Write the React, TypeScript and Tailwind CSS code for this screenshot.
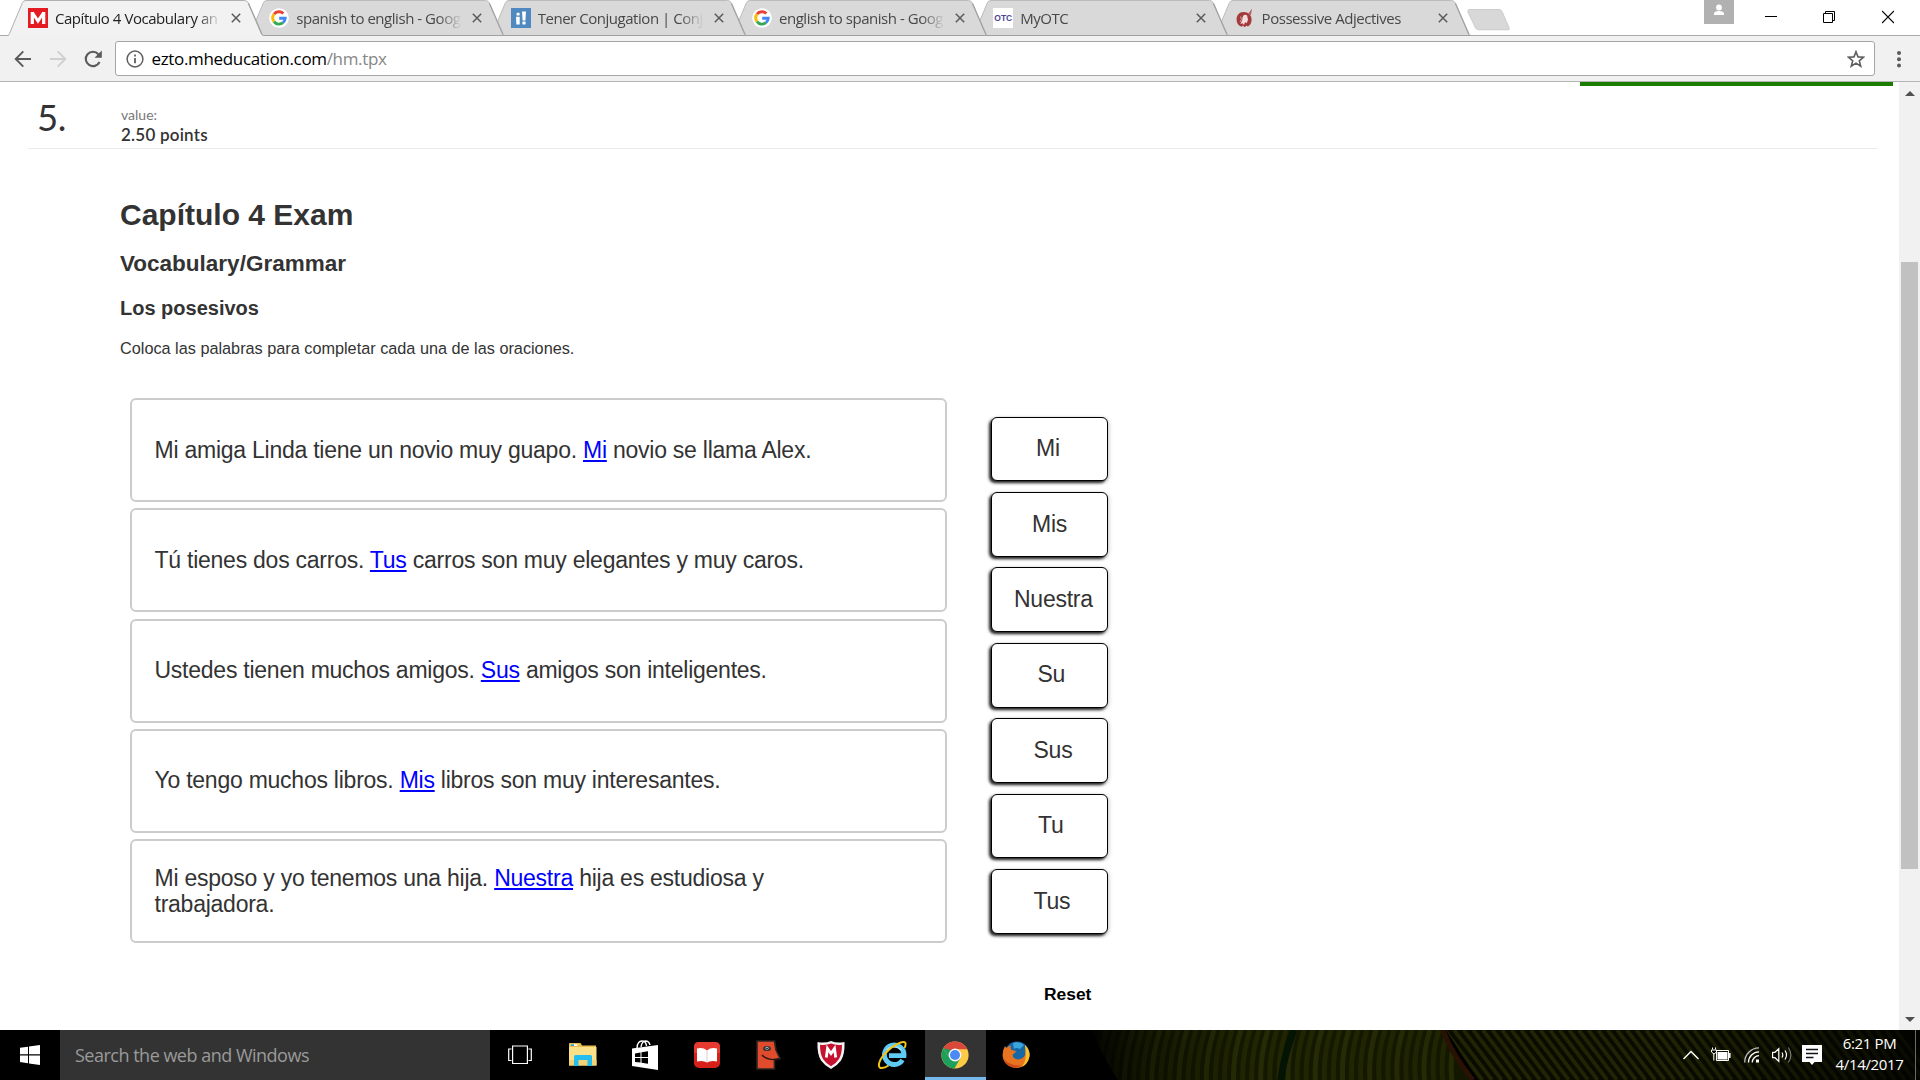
import React from "react";

type Tab = { title: string; icon: React.ReactNode; active?: boolean };

const GoogleIcon = () => (
  <svg width="20" height="20" viewBox="0 0 20 20" fill="none" strokeWidth="2.9">
    <circle cx="10" cy="10" r="9.8" fill="#fff" />
    <path d="M5 6.2A6.2 6.2 0 0 1 14.4 5.6" stroke="#ea4335" />
    <path d="M5 13.6A6.3 6.3 0 0 1 5 6.2" stroke="#fbbc05" />
    <path d="M14 14.7A6.2 6.2 0 0 1 5 13.6" stroke="#34a853" />
    <path d="M10.2 10.2H16.2A6.2 6.2 0 0 1 14 14.7" stroke="#4285f4" />
  </svg>
);

const MIcon = () => (
  <svg width="20" height="20" viewBox="0 0 20 20">
    <rect width="20" height="20" fill="#e51b24" />
    <path d="M4.300 16V4M15.700 16V4" stroke="#fff" strokeWidth="3.200" />
    <path d="M4.300 4.500L10 13L15.700 4.500" stroke="#fff" strokeWidth="3" fill="none" />
  </svg>
);

const ConjIcon = () => (
  <svg width="20" height="20" viewBox="0 0 20 20">
    <rect width="20" height="20" fill="#5089c0" />
    <g fill="#fff">
      <rect x="5.6" y="4.8" width="3" height="2.8" rx="0.6" />
      <path d="M5 8.8h3.7V16.4H5.4z" />
      <path d="M11 3.6h4l-.6 8.800h-2.800z" />
      <rect x="11.4" y="13.4" width="3.2" height="3" rx="0.6" />
    </g>
  </svg>
);

const OtcIcon = () => (
  <span className="flex h-5 w-5 items-center justify-center bg-white font-['Liberation_Sans',sans-serif] text-[8.5px] font-bold leading-5 text-[#4b4696]">
    OTC
  </span>
);

const SpanishIcon = () => (
  <svg width="20" height="20" viewBox="0 0 20 20">
    <path d="M8.500 4C4 4 1.600 7.400 1.600 11.400c0 4.400 3 7 5.400 7.200l1-1.200 1.400 1.800 2-1.400 1.600.6c2.400-1.200 3.600-3.500 3.600-6.800C16.600 7.200 13.500 4 8.500 4z" fill="#a53a3c" />
    <path d="M13 6L17 .6L16 7z" fill="#b96062" />
    <path d="M8.400 7.400c1.600-1.400 4.200-.4 4 1.600 0 1.400 1 1.800.4 3.200l-1 2.800-1.800-.8-1 2.800-1.400-1.800-2.200.8 1.600-3.200c.8-1.600-.2-2.600 1.400-5.400z" fill="#f1dede" />
    <path d="M5.500 8.500l1 3-1.500 2.500" stroke="#e3bcbc" strokeWidth=".8" fill="none" />
  </svg>
);

const TABS: Tab[] = [
  { title: "Capítulo 4 Vocabulary an", icon: <MIcon />, active: true },
  { title: "spanish to english - Goog", icon: <GoogleIcon /> },
  { title: "Tener Conjugation | Conju", icon: <ConjIcon /> },
  { title: "english to spanish - Goog", icon: <GoogleIcon /> },
  { title: "MyOTC", icon: <OtcIcon /> },
  { title: "Possessive Adjectives", icon: <SpanishIcon /> },
];

function TabItem({ tab, z }: { tab: Tab; z: number }) {
  return (
    <div className="relative -mr-[15.7px] flex h-9 w-[257px] shrink-0 items-center pl-[21px]" style={{ zIndex: z }}>
      <svg className="absolute inset-0" width="257" height="36" viewBox="0 0 257 36">
        <path
          d="M0 35.500C1.500 35.500 2 34.500 2.500 33.500L15.500 2.500Q16.500 .5 19 .5H237.500Q240 .5 241 2.500L254.500 33.500Q255.400 35.500 257 35.500"
          fill={tab.active ? "#f2f2f2" : "#d9d9d9"}
          stroke={tab.active ? "#b0b0b0" : "#bcbcbc"}
          strokeWidth="1"
        />
        <path d="M241.500 3.500L255 34.500" stroke="#a3a3a3" strokeWidth="1.300" />
        {tab.active ? <path d="M2 35.500H255" stroke="#f2f2f2" /> : <path d="M0 35.500H257" stroke="#a0a0a0" />}
      </svg>
      <span className="relative h-5 w-5">{tab.icon}</span>
      <span
        className={
          "relative ml-[7px] w-[165px] overflow-hidden whitespace-nowrap text-[15px] leading-9 tracking-[-0.46px] [mask-image:linear-gradient(to_right,#000_142px,transparent_166px)] " +
          (tab.active ? "text-[#222]" : "text-[#484848]")
        }
      >
        {tab.title}
      </span>
      <svg className="relative ml-[11px]" width="10" height="10" viewBox="0 0 10 10" stroke="#5a5a5a" strokeWidth="1.500">
        <path d="M.8 .8L9.200 9.200M9.200 .8L.8 9.200" />
      </svg>
    </div>
  );
}

function TitleBar() {
  return (
    <div className="relative flex h-9 w-full justify-between border-b border-[#a9a9a9] bg-white">
      <div className="flex h-9 pl-[7px]">
        {TABS.map((t, i) => (
          <TabItem key={i} tab={t} z={10 - i} />
        ))}
        <svg className="ml-[12px] mt-[9px]" width="44" height="22" viewBox="0 0 44 22">
          <path d="M3 .5H32.500Q34 .5 35 2.500L42 18.500Q43 20.800 41 20.800H11.500Q9.500 20.800 8.500 19L1 3Q0 .5 3 .5z" fill="#d8d8d8" stroke="#cbcbcb" />
        </svg>
      </div>
      <div className="flex">
        <div className="mr-[31px] flex h-6 w-[30px] justify-center bg-[#b1b1b1]">
          <svg width="12" height="24" viewBox="0 0 12 24" fill="#fff">
            <circle cx="6" cy="7.500" r="2.900" />
            <path d="M1 15v-1.500C1 11.800 4 11 6 11s5 .8 5 2.500V15z" />
          </svg>
        </div>
        <svg className="mr-[46px]" width="12" height="36" viewBox="0 0 12 36">
          <path d="M0 16.500H12" stroke="#000" />
        </svg>
        <svg className="mr-[47px]" width="12" height="36" viewBox="0 0 12 36" fill="none" stroke="#000">
          <path d="M.5 13.500H9.500V22.500H.5z M2.500 13.500V11.500H11.500V20.500H9.500" />
        </svg>
        <svg className="mr-[26px]" width="12" height="36" viewBox="0 0 12 36" stroke="#000" strokeWidth="1.200">
          <path d="M0 11L12 23M12 11L0 23" />
        </svg>
      </div>
    </div>
  );
}

function Toolbar() {
  return (
    <div className="flex h-[46px] items-start border-b border-[#b4b4b4] bg-[#f1f1f1] pt-[5px]">
      <svg className="ml-[14px] mt-[9px]" width="18" height="18" viewBox="0 0 18 18" fill="none" stroke="#5a5a5a" strokeWidth="1.900">
        <path d="M17 9H2M9.300 1.400L1.700 9L9.300 16.600" />
      </svg>
      <svg className="ml-[17px] mt-[9px]" width="18" height="18" viewBox="0 0 18 18" fill="none" stroke="#d0d0d0" strokeWidth="1.900">
        <path d="M1 9H16M8.700 1.400L16.300 9L8.700 16.600" />
      </svg>
      <svg className="ml-[17px] mt-[9px]" width="19" height="18" viewBox="0 0 19 18">
        <path d="M15.500 12A7.200 7.200 0 1 1 14.400 4.200" fill="none" stroke="#5a5a5a" strokeWidth="2.100" />
        <path d="M17.800 .5V7.800H10.500z" fill="#5a5a5a" />
      </svg>
      <div className="ml-[12px] flex h-[35px] w-[1760px] items-center rounded-[3px] border border-[#a6a6a6] bg-white pl-[9.500px] pr-[9px]">
        <svg width="18" height="18" viewBox="0 0 18 18" fill="none" stroke="#5f5f5f">
          <circle cx="9" cy="9" r="7.900" strokeWidth="1.500" />
          <path d="M9 8V13.200M9 4.600V6.500" strokeWidth="1.800" />
        </svg>
        <span className="ml-[8px] flex-1 text-[17px] leading-8 tracking-[-0.34px] text-black">
          ezto.mheducation.com<span className="text-[#868686]">/hm.tpx</span>
        </span>
        <svg width="18" height="18" viewBox="0 0 18 18" fill="none" stroke="#5f5f5f" strokeWidth="1.600">
          <path d="M9 1.700L11 6.900L16.600 7.200L12.300 10.800L13.700 16.200L9 13.200L4.300 16.200L5.700 10.800L1.400 7.200L7 6.900z" />
        </svg>
      </div>
      <svg className="ml-[21px] mt-[9px]" width="6" height="19" viewBox="0 0 6 19" fill="#5a5a5a">
        <circle cx="3" cy="3" r="2" />
        <circle cx="3" cy="9.300" r="2" />
        <circle cx="3" cy="15.600" r="2" />
      </svg>
    </div>
  );
}

const SENTENCES: [string, string, string][] = [
  ["Mi amiga Linda tiene un novio muy guapo. ", "Mi", " novio se llama Alex."],
  ["Tú tienes dos carros. ", "Tus", " carros son muy elegantes y muy caros."],
  ["Ustedes tienen muchos amigos. ", "Sus", " amigos son inteligentes."],
  ["Yo tengo muchos libros. ", "Mis", " libros son muy interesantes."],
  ["Mi esposo y yo tenemos una hija. ", "Nuestra", " hija es estudiosa y trabajadora."],
];

const WORDS: [string, number][] = [
  ["Mi", 44],
  ["Mis", 40],
  ["Nuestra", 22],
  ["Su", 45.5],
  ["Sus", 41.5],
  ["Tu", 46],
  ["Tus", 41.5],
];

function Question() {
  return (
    <div className="flex-1 font-['Liberation_Sans',Arial,sans-serif] text-[#333]">
      <div className="flex h-1 justify-end pr-[6px]">
        <div className="h-1 w-[313px] bg-[#1b7c02]" />
      </div>
      <div className="ml-[28px] mr-[21px] flex h-[63px] border-b border-[#ebebeb] font-['Lato',sans-serif]">
        <div className="w-[93px] pl-[9px] pt-[9px] text-[36.5px] leading-[44px] tracking-[-0.5px]">5.</div>
        <div className="pt-[18.500px]">
          <div className="text-[14px] leading-5 text-[#777]">value:</div>
          <div className="text-[17px] font-semibold leading-[19px] tracking-[0.22px]">2.50 points</div>
        </div>
      </div>
      <div className="pl-[120px] pt-[46px]">
        <h1 className="text-[30px] font-bold leading-[40px]">Capítulo 4 Exam</h1>
        <h2 className="mt-[14px] text-[22.5px] font-bold leading-[30px]">Vocabulary/Grammar</h2>
        <h3 className="mt-[14px] text-[20px] font-bold leading-[30px]">Los posesivos</h3>
        <p className="mt-[15px] text-[16.25px] leading-5">Coloca las palabras para completar cada una de las oraciones.</p>
      </div>
      <div className="mt-[40px] flex pl-[130px]">
        <div className="flex w-[817px] flex-col gap-[6.3px]">
          {SENTENCES.map(([a, w, b]) => (
            <div key={a} className="flex h-[104px] items-center rounded-[6px] border-2 border-[#ccc] bg-white pb-px pl-[22.500px]">
              <p className="max-w-[700px] text-[23px] leading-[26px] tracking-[-0.245px]">
                {a}
                <span className="text-[#0000ff] underline">{w}</span>
                {b}
              </p>
            </div>
          ))}
        </div>
        <div className="ml-[44px] flex flex-col gap-[10.6px] pt-[18.600px]">
          {WORDS.map(([w, x]) => (
            <div
              key={w}
              className="flex h-[64.8px] w-[117px] items-center rounded-[6px] border border-black bg-white pb-[1.500px] text-[23px] leading-[26px] tracking-[-0.245px] shadow-[-2px_2px_3px_#222,1px_1px_4px_#ccc]"
              style={{ paddingLeft: x }}
            >
              {w}
            </div>
          ))}
          <div className="pl-[53px] pt-[39.500px] text-[17.4px] font-bold leading-5 text-black">Reset</div>
        </div>
      </div>
    </div>
  );
}

function Scrollbar() {
  return (
    <div className="flex w-[21px] flex-col items-center bg-[#f1f1f1]">
      <svg className="mt-[9px]" width="10" height="5" viewBox="0 0 10 5">
        <path d="M5 0L10 5H0z" fill="#505050" />
      </svg>
      <div className="mt-[166px] h-[607px] w-[17px] bg-[#c1c1c1]" />
      <svg className="mt-[148px]" width="10" height="5" viewBox="0 0 10 5">
        <path d="M5 5L10 0H0z" fill="#505050" />
      </svg>
    </div>
  );
}

function LeafPattern() {
  const left = Array.from({ length: 40 }, (_, i) => 1098 + i * 9);
  const right = Array.from({ length: 52 }, (_, i) => 1406 + i * 9.6);
  return (
    <svg className="absolute inset-y-0 right-0" width="840" height="50" viewBox="1080 0 840 50" preserveAspectRatio="none">
      <defs>
        <linearGradient id="leafFade" x1="0" x2="1" y1="0" y2="0">
          <stop offset="0" stopColor="#000" stopOpacity="1" />
          <stop offset=".08" stopColor="#000" stopOpacity=".35" />
          <stop offset=".2" stopColor="#000" stopOpacity="0" />
          <stop offset=".7" stopColor="#000" stopOpacity=".05" />
          <stop offset="1" stopColor="#000" stopOpacity=".75" />
        </linearGradient>
        <clipPath id="leftLeaf"><path d="M1092 0H1441L1474 50H1118Q1102 25 1092 0z" /></clipPath>
        <clipPath id="rightLeaf"><path d="M1446 0H1920V50H1478z" /></clipPath>
      </defs>
      <rect x="1080" width="840" height="50" fill="#000" />
      <g clipPath="url(#leftLeaf)">
        <rect x="1080" width="400" height="50" fill="#141800" />
        {left.map((x, i) => (
          <path key={x} d={`M${x + 8} 0Q${x} 25 ${x - 1 + i * 0.1} 50`} stroke={i % 3 ? "#202502" : "#262b05"} strokeWidth="5" fill="none" />
        ))}
        <path d="M1294 0Q1284 25 1281 50" stroke="#041404" strokeWidth="7" fill="none" />
      </g>
      <g clipPath="url(#rightLeaf)">
        <rect x="1440" width="480" height="50" fill="#0a0c00" />
        {right.map((x) => (
          <path key={x} d={`M${x} 0L${x + 38} 50`} stroke="#222604" strokeWidth="3.800" />
        ))}
      </g>
      <path d="M1443 0Q1452 25 1473 50" stroke="#2a1204" strokeWidth="5" fill="none" />
      <rect x="1080" width="840" height="50" fill="url(#leafFade)" />
    </svg>
  );
}

const FolderIcon = () => (
  <svg width="28" height="30" viewBox="0 0 28 30">
    <path d="M0 3.500Q0 3 .8 3H11.500L13 5.500H27V25H0z" fill="#e9bd4e" />
    <path d="M2 4.200H8.500V6H2z" fill="#fff" />
    <path d="M2 4.200H5V6H2z" fill="#28a5dc" />
    <path d="M0 7H27.500V25.500H0z" fill="#fbe08a" />
    <path d="M0 20H27.500V25.500H0z" fill="#f5d273" />
    <path d="M5 26V16.500Q5 15 6.500 15H21.500Q23 15 23 16.500V26H18.500V20H9.500V26z" fill="#23bdf0" />
  </svg>
);

const StoreIcon = () => (
  <svg width="26" height="30" viewBox="0 0 26 30">
    <path d="M5 8Q5.500 1 10 1Q14 1 14.500 6M9 7Q10 1 13.500 1Q17 1 18 5" fill="none" stroke="#fff" strokeWidth="1.400" />
    <path d="M0 8.500L26 5V30L0 26z" fill="#fff" />
    <path d="M3 13.500L8.500 12.500V17H3zM9.500 12.300L16 11.200V17H9.500zM3 18H8.500V22.500L3 22zM9.500 18H16V23.700L9.500 22.800z" fill="#000" />
  </svg>
);

const BookIcon = () => (
  <svg width="26" height="30" viewBox="0 0 26 30">
    <rect y="2" width="26" height="26" rx="5" fill="#d91f1a" />
    <path d="M0 7Q0 2 5 2H21Q26 2 26 7V13H0z" fill="#e6392f" />
    <path d="M3 8.500Q9 7 13 10.500Q17 7 23 8.500V21.500Q17 20 13 22.500Q9 20 3 21.500z" fill="#fff" />
    <path d="M13 10.500V22" stroke="#cfc4c0" strokeWidth=".8" />
  </svg>
);

const FaceIcon = () => (
  <svg width="25" height="30" viewBox="0 0 25 30">
    <path d="M1 1H18.500L20 10L24 18.500L18.500 19.500V29H1z" fill="#df4b2c" stroke="#2b2422" strokeWidth="1.600" />
    <path d="M6 15Q11 20.500 22 19.500" fill="none" stroke="#2b1712" strokeWidth="1.400" />
    <ellipse cx="11" cy="8.500" rx="4" ry="2.600" fill="#3b3634" />
    <circle cx="11" cy="8.300" r="1.500" fill="#b9c6c9" />
    <circle cx="11" cy="8.500" r=".8" fill="#000" />
  </svg>
);

const ShieldIcon = () => (
  <svg width="28" height="30" viewBox="0 0 28 30">
    <path d="M14 1Q20 3.500 27.500 2Q28 14 24 20.500Q20 26 14 29Q8 26 4 20.500Q0 14 .5 2Q8 3.500 14 1z" fill="#f4f4f4" />
    <path d="M14 3.600Q19 5.600 25 4.700Q25 14 22 19Q19 23.500 14 26.300Q9 23.500 6 19Q3 14 3 4.700Q9 5.600 14 3.600z" fill="#c5122f" />
    <path d="M9.300 17.500L10.500 8.500L14 13.500L17.500 8.500L18.700 17.500" fill="none" stroke="#fff" strokeWidth="2.800" />
  </svg>
);

const IeIcon = () => (
  <svg width="29" height="30" viewBox="0 0 29 30" fill="none">
    <path d="M24.500 20A9.800 9.800 0 1 1 26 15.700H11" stroke="#5fcbf5" strokeWidth="4.800" />
    <path d="M23 10A9.500 9.500 0 0 0 8.500 10" stroke="#a6e6fb" strokeWidth="1.500" />
    <path d="M26.500 8C29.500 1.500 26 .5 19.500 3.800C10 8.500 1 19 .9 25C.9 29.500 6 28.500 10.500 25.500" stroke="#f3c316" strokeWidth="2" />
  </svg>
);

const ChromeIcon = () => (
  <svg width="28" height="30" viewBox="0 0 28 30">
    <circle cx="14" cy="15" r="13.600" fill="#fdca46" />
    <path d="M14 15L2.220 8.200A13.600 13.600 0 0 1 26.300 9.300H14z" fill="#d9483b" />
    <path d="M2.220 8.200A13.600 13.600 0 0 0 13.400 28.600L19.200 18.500L14 15L8.500 18z" fill="#1ca05c" />
    <path d="M2.220 8.200L8.800 18.200L10 10z" fill="#1ca05c" />
    <circle cx="14" cy="15" r="6.400" fill="#f4f4f4" />
    <circle cx="14" cy="15" r="5" fill="#4b8af4" />
  </svg>
);

const FirefoxIcon = () => (
  <svg width="28" height="30" viewBox="0 0 28 30">
    <circle cx="15" cy="14" r="12.500" fill="#1768a6" />
    <path d="M11 3Q18 1 22 5L18 9Q14 7 12 9z" fill="#3aa6dc" />
    <path d="M23 5Q28 10 27.500 16A13.500 13.500 0 0 1 .8 17Q0 11 3 6L4.500 8Q6 6 9 5.500Q8 8 9.500 10L14 11Q13.500 13.500 10.500 14.500Q11 19 16 19.500Q24 19 23.500 10z" fill="#e9741f" />
    <path d="M23 5Q28 10 27.500 16Q26 24 20 27Q25 20 23.500 10z" fill="#fbc02c" />
    <path d="M.8 17Q2 20 6 22.500Q12 26 19 25.500Q14 29 9 27Q2 24 .8 17z" fill="#cf4a1b" />
  </svg>
);

function Taskbar() {
  return (
    <div className="relative flex h-[50px] items-stretch bg-black">
      <LeafPattern />
      <div className="relative flex w-[60px] items-center justify-center">
        <svg width="20" height="20" viewBox="0 0 20 20" fill="#fff">
          <path d="M0 2.800L8 1.700V9.300H0zM9 1.500L20 0V9.300H9zM0 10.500H8V18.200L0 17.100zM9 10.500H20V20L9 18.400z" />
        </svg>
      </div>
      <div className="relative w-[430px] bg-[#333] pl-[15px] text-[18px] leading-[50px] tracking-[-0.5px] text-[#9a9a9a]">Search the web and Windows</div>
      <div className="relative flex w-[60px] items-center justify-center">
        <svg width="24" height="20" viewBox="0 0 24 20" fill="none" stroke="#fff" strokeWidth="1.200">
          <path d="M4.600 1H19.400V18.500H4.600zM3.500 4H.7V15.500H3.500M20.500 4H23.300V15.500H20.500" />
        </svg>
      </div>
      <div className="relative flex pl-[2px]">
        {[FolderIcon, StoreIcon, BookIcon, FaceIcon, ShieldIcon, IeIcon].map((Icon, i) => (
          <div key={i} className="flex w-[61.9px] items-center justify-center">
            <Icon />
          </div>
        ))}
      </div>
      <div className="relative ml-[1.600px] flex w-[61px] items-center justify-center border-b-[3px] border-[#76b9ed] bg-[#333] pr-px pt-[2px]">
        <ChromeIcon />
      </div>
      <div className="relative flex w-[61px] items-center justify-center">
        <FirefoxIcon />
      </div>
      <div className="relative ml-auto flex items-center">
        <svg className="mr-[12px]" width="16" height="10" viewBox="0 0 16 10" fill="none" stroke="#fff" strokeWidth="1.400">
          <path d="M.5 9L8 1.500L15.500 9" />
        </svg>
        <svg className="mr-[13px]" width="20" height="16" viewBox="0 0 20 16" fill="none" stroke="#fff">
          <path d="M5.500 3.500H17.500V13.500H5.500z" />
          <path d="M6.500 5H16.500V12.500H6.500z" fill="#fff" stroke="none" />
          <path d="M18.800 6V11" strokeWidth="1.500" />
          <path d="M1.500 .5V2.500M4.500 .5V2.500" />
          <path d="M.5 3H5.500V5L3 7L.5 5z" fill="#000" />
          <path d="M2.800 7V13.500" />
        </svg>
        <svg className="mr-[12px]" width="16" height="16" viewBox="0 0 16 16" fill="none" stroke="#fff" strokeWidth="1.300">
          <path d="M.7 15.500A14.500 14.500 0 0 1 15 .8" stroke="#bbb" />
          <path d="M4.500 15.500A10.500 10.500 0 0 1 15 4.800M8.200 15.500A7 7 0 0 1 15 8.700" />
          <rect x="12" y="12.500" width="3" height="3" fill="#fff" stroke="none" />
        </svg>
        <svg className="mr-[10px]" width="20" height="18" viewBox="0 0 20 18" fill="none" stroke="#fff" strokeWidth="1.200">
          <path d="M.6 6.300H3L6.800 2.600V15.400L3 11.700H.6zM10 6.500Q11.600 9 10 11.500M13 4.500Q16 9 13 13.500" />
          <path d="M16.300 1.500Q21.500 9 16.300 16.500" stroke="#777" />
        </svg>
        <svg className="mr-[12.500px]" width="20" height="20" viewBox="0 0 20 20">
          <path d="M0 0H20V17H12.500L10 20L7.500 17H0z" fill="#fff" />
          <path d="M4 4.500H16M4 8.500H16M4 12.500H11.500" stroke="#111" strokeWidth="1.300" />
        </svg>
        <div className="w-[70px] pb-[2px] text-center text-[15px] leading-[21px] tracking-[-0.35px] text-white">
          <div>6:21 PM</div>
          <div>4/14/2017</div>
        </div>
        <div className="ml-[10.500px] h-[50px] w-[5px] border-l border-[#6a6a6a]" />
      </div>
    </div>
  );
}

export default function App() {
  return (
    <div className="flex h-[1080px] w-[1920px] flex-col overflow-hidden bg-white font-['Open_Sans','Noto_Sans',sans-serif]">
      <TitleBar />
      <Toolbar />
      <div className="flex h-[948px] overflow-hidden">
        <Question />
        <Scrollbar />
      </div>
      <Taskbar />
    </div>
  );
}
